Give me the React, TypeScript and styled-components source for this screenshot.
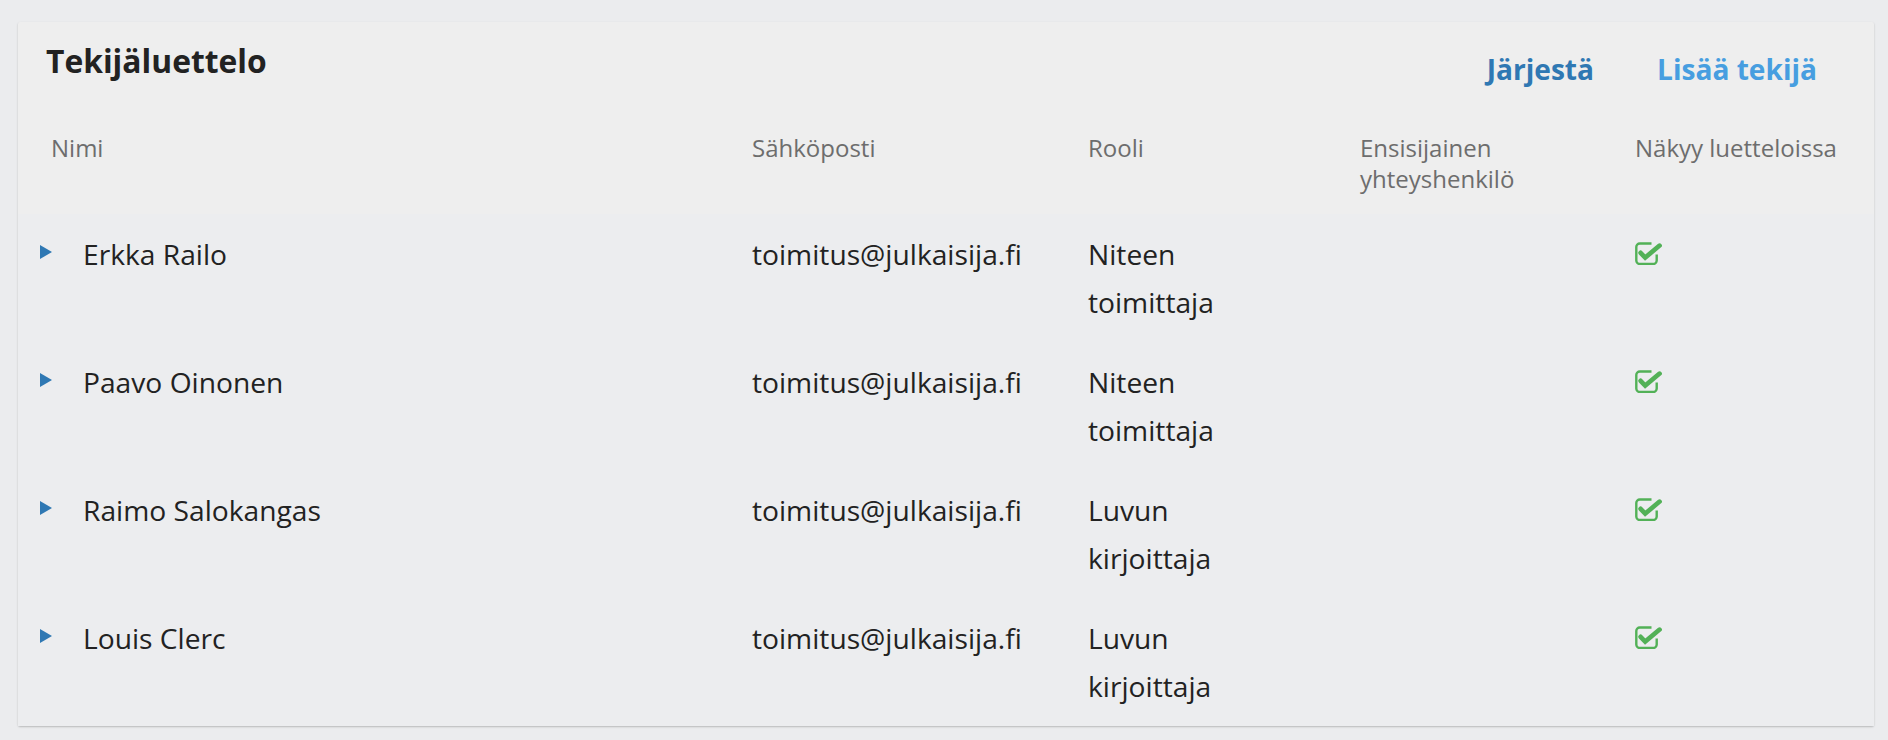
import React from "react";
import styled, { createGlobalStyle } from "styled-components";

const GlobalStyle = createGlobalStyle`
  html, body {
    margin: 0;
    padding: 0;
    background: #ebecee;
    font-family: "Open Sans", "Noto Sans", Arial, sans-serif;
  }
`;

const Page = styled.div`
  padding: 22px 14px 15px 18px;
`;

const Card = styled.section`
  background: #eeeeee;
  box-shadow: 0 1px 2px rgba(0, 0, 0, 0.22);
  border-radius: 2px;
  padding-top: 19px;
`;

const CardHeader = styled.div`
  display: flex;
  justify-content: space-between;
  align-items: flex-start;
  padding: 0 57px 0 28px;
`;

const Title = styled.h2`
  margin: 0;
  font-size: 31.8px;
  line-height: 40px;
  font-weight: 700;
  color: #222222;
`;

const Actions = styled.div`
  display: flex;
  gap: 63px;
  margin-top: 12px;
`;

const ActionLink = styled.a<{ $light?: boolean }>`
  font-size: 28.1px;
  line-height: 1.2;
  font-weight: 700;
  color: ${(p) => (p.$light ? "#479ee0" : "#2f78b3")};
  text-decoration: none;
  cursor: pointer;
`;

const Grid = styled.div`
  display: grid;
  grid-template-columns: 712px 336px 272px 275px 1fr;
  padding-left: 22px;
`;

const HeadRow = styled(Grid)`
  margin-top: 29px;
  padding-top: 16px;
  padding-bottom: 20px;
  align-items: start;
`;

const HeadCell = styled.div<{ $indent?: number }>`
  font-size: 24px;
  line-height: 1.3;
  color: #6d6d6d;
  padding-left: ${(p) => p.$indent ?? 0}px;
  padding-right: 16px;
`;

const Row = styled(Grid)`
  padding-top: 16px;
  padding-bottom: 16px;
  background: #ecedef;
  align-items: start;
`;

const Cell = styled.div<{ $narrow?: boolean }>`
  font-size: 28.2px;
  line-height: 48px;
  color: #222222;
  ${(p) => (p.$narrow ? "max-width: 180px;" : "")}
`;

const NameCell = styled(Cell)`
  display: flex;
  align-items: flex-start;
  gap: 31px;
`;

const Caret = styled.span`
  display: block;
  width: 0;
  height: 0;
  margin-top: 15px;
  border-top: 7.5px solid transparent;
  border-bottom: 7.5px solid transparent;
  border-left: 12px solid #2f78b3;
`;

const CheckWrap = styled.span`
  display: inline-flex;
  margin-top: 12px;
`;

const CheckIcon = () => (
  <CheckWrap>
    <svg width="27" height="23" viewBox="0 0 27 23" aria-hidden="true">
      <path
        d="M16.5 1.5 H4.8 A3.5 3.5 0 0 0 1.3 5 V18.5 A3.5 3.5 0 0 0 4.8 22 H18.2 A3.5 3.5 0 0 0 21.7 18.5 V12.5"
        fill="none"
        stroke="#52b157"
        strokeWidth="2.4"
      />
      <path
        d="M5.6 10.8 L10.2 15.6 L24.6 3.6"
        fill="none"
        stroke="#52b157"
        strokeWidth="4.6"
        strokeLinejoin="miter"
        strokeLinecap="round"
      />
    </svg>
  </CheckWrap>
);

type Person = { name: string; email: string; role: string; visible: boolean };

const people: Person[] = [
  { name: "Erkka Railo", email: "toimitus@julkaisija.fi", role: "Niteen toimittaja", visible: true },
  { name: "Paavo Oinonen", email: "toimitus@julkaisija.fi", role: "Niteen toimittaja", visible: true },
  { name: "Raimo Salokangas", email: "toimitus@julkaisija.fi", role: "Luvun kirjoittaja", visible: true },
  { name: "Louis Clerc", email: "toimitus@julkaisija.fi", role: "Luvun kirjoittaja", visible: true },
];

export default function App() {
  return (
    <>
      <GlobalStyle />
      <Page>
        <Card>
          <CardHeader>
            <Title>Tekijäluettelo</Title>
            <Actions>
              <ActionLink>Järjestä</ActionLink>
              <ActionLink $light>Lisää tekijä</ActionLink>
            </Actions>
          </CardHeader>
          <HeadRow>
            <HeadCell $indent={11}>Nimi</HeadCell>
            <HeadCell>Sähköposti</HeadCell>
            <HeadCell>Rooli</HeadCell>
            <HeadCell>Ensisijainen yhteyshenkilö</HeadCell>
            <HeadCell>Näkyy luetteloissa</HeadCell>
          </HeadRow>
          {people.map((p) => (
            <Row key={p.name}>
              <NameCell>
                <Caret />
                <span>{p.name}</span>
              </NameCell>
              <Cell>{p.email}</Cell>
              <Cell $narrow>{p.role}</Cell>
              <Cell />
              <Cell>{p.visible && <CheckIcon />}</Cell>
            </Row>
          ))}
        </Card>
      </Page>
    </>
  );
}
